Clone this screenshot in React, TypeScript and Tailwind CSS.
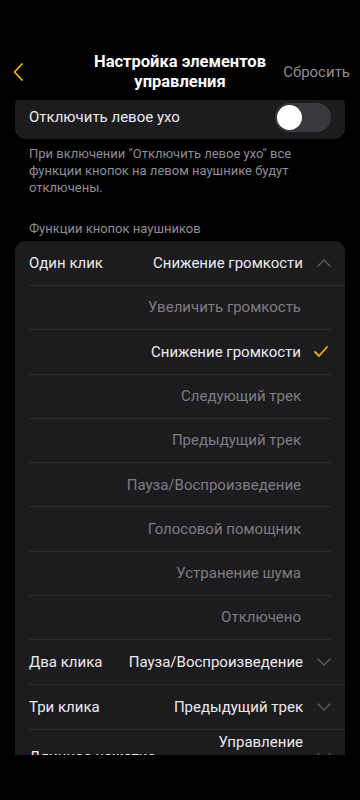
import React from "react";

const font = { fontFamily: "Roboto, 'Noto Sans', sans-serif" };

function Chevron({ up }: { up?: boolean }) {
  return (
    <svg width="14" height="8" viewBox="0 0 14 8" fill="none" className="shrink-0">
      {up ? (
        <path d="M1 7L7 1L13 7" stroke="#5c5c60" strokeWidth="1.4" strokeLinecap="round" strokeLinejoin="round" />
      ) : (
        <path d="M1 1L7 7L13 1" stroke="#5c5c60" strokeWidth="1.4" strokeLinecap="round" strokeLinejoin="round" />
      )}
    </svg>
  );
}

function Check() {
  return (
    <svg width="14" height="11" viewBox="0 0 14 11" fill="none" className="shrink-0">
      <path d="M1 6L5 10L13 1" stroke="#e8b10c" strokeWidth="1.8" strokeLinecap="round" strokeLinejoin="round" />
    </svg>
  );
}

const options = [
  "Увеличить громкость",
  "Снижение громкости",
  "Следующий трек",
  "Предыдущий трек",
  "Пауза/Воспроизведение",
  "Голосовой помощник",
  "Устранение шума",
  "Отключено",
];

export default function App() {
  return (
    <div className="w-[360px] h-[800px] bg-black overflow-hidden flex flex-col" style={font}>
      {/* Header */}
      <div className="h-[100px] shrink-0 flex items-end pb-[4px]">
        <div className="w-full flex items-center relative h-[48px]">
          <div className="w-[52px] pl-[13px] flex items-center">
            <svg width="10" height="18" viewBox="0 0 10 18" fill="none">
              <path d="M9 1L1.5 9L9 17" stroke="#e8b10c" strokeWidth="1.8" strokeLinecap="round" strokeLinejoin="round" />
            </svg>
          </div>
          <div className="flex-1 text-center text-white font-bold text-[16.5px] leading-[20px] pl-[26px]">
            Настройка элементов
            <br />
            управления
          </div>
          <div className="w-[78px] text-[#8e8e93] text-[15px] pr-[10px] text-right">Сбросить</div>
        </div>
      </div>

      {/* Scroll area */}
      <div className="h-[655px] overflow-hidden shrink-0">
        <div className="mt-[-5px] px-[15px]">
          <div className="bg-[#1c1c1e] rounded-[10px] h-[44px] flex items-center justify-between pl-[14px] pr-[14px]">
            <span className="text-[#ebebf0] text-[15px]">Отключить левое ухо</span>
            <div className="w-[56px] h-[29px] rounded-full bg-[#39393d] p-[2px] flex items-center">
              <div className="w-[25px] h-[25px] rounded-full bg-white" />
            </div>
          </div>
          <p className="mt-[6px] px-[14px] text-[13px] leading-[17px] text-[#8e8e93]">
            При включении "Отключить левое ухо" все функции кнопок на левом наушнике будут отключены.
          </p>
          <p className="mt-[24px] px-[14px] text-[13px] leading-[17px] text-[#8e8e93]">
            Функции кнопок наушников
          </p>
          <div className="mt-[4px] bg-[#1c1c1e] rounded-[10px]">
            <div className="pl-[14px]">
              <div className="h-[45px] flex items-center border-b border-[#2c2c2e] pr-[14px]">
                <span className="text-[#ebebf0] text-[15px]">Один клик</span>
                <span className="ml-auto text-[#ebebf0] text-[15px] mr-[14px]">Снижение громкости</span>
                <Chevron up />
              </div>
              <div className="pr-[14px]">
                {options.map((o) => {
                  const sel = o === "Снижение громкости";
                  return (
                    <div key={o} className="h-[44.3px] flex items-center justify-end border-b border-[#2c2c2e]">
                      <span className={"text-[15px] " + (sel ? "text-[#ebebf0]" : "text-[#7d7d82]")}>{o}</span>
                      <span className="w-[30px] flex justify-end pr-[3px]">{sel ? <Check /> : null}</span>
                    </div>
                  );
                })}
              </div>
              <div className="h-[45px] flex items-center border-b border-[#2c2c2e] pr-[14px]">
                <span className="text-[#ebebf0] text-[15px]">Два клика</span>
                <span className="ml-auto text-[#ebebf0] text-[15px] mr-[14px]">Пауза/Воспроизведение</span>
                <Chevron />
              </div>
              <div className="h-[45px] flex items-center border-b border-[#2c2c2e] pr-[14px]">
                <span className="text-[#ebebf0] text-[15px]">Три клика</span>
                <span className="ml-auto text-[#ebebf0] text-[15px] mr-[14px]">Предыдущий трек</span>
                <Chevron />
              </div>
              <div className="h-[54px] flex items-center pr-[14px]">
                <span className="text-[#ebebf0] text-[15px]">Длинное нажатие</span>
                <span className="ml-auto self-start pt-[1px] text-[#ebebf0] text-[15px] leading-[22px] mr-[14px] text-right">
                  Управление
                  <br />
                  шумоподавлением
                </span>
                <Chevron />
              </div>
            </div>
          </div>
          <div className="h-[40px]" />
        </div>
      </div>
    </div>
  );
}
